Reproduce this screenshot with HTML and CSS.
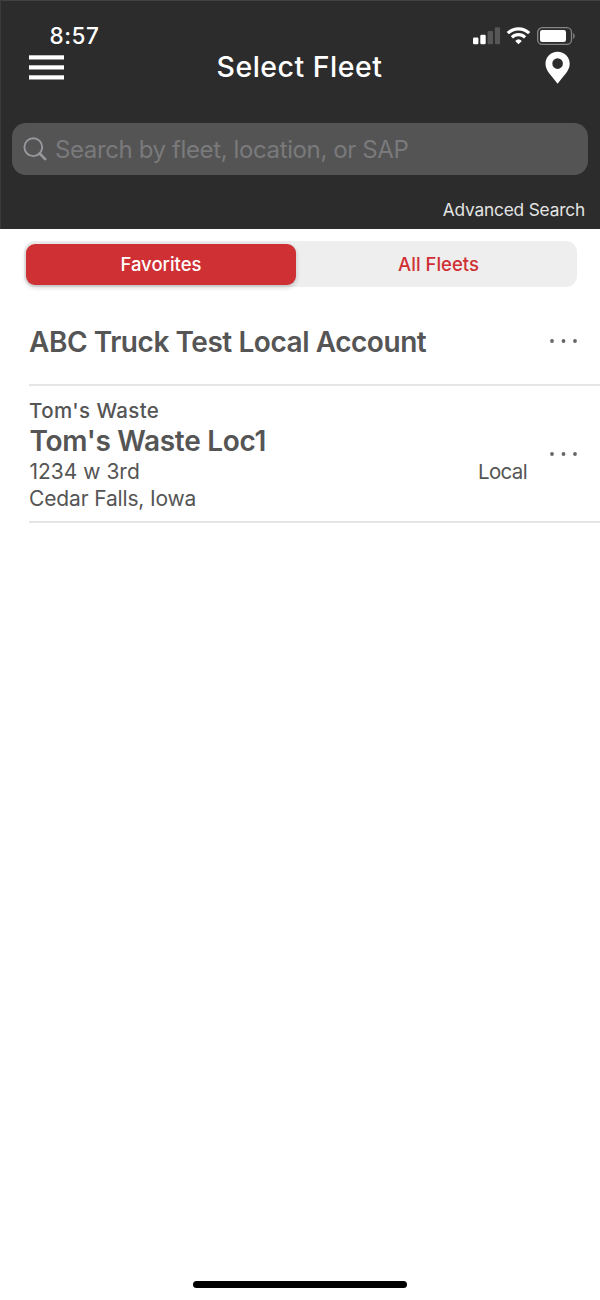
FILE: index.html
```html
<!DOCTYPE html>
<html lang="en">
<head>
<meta charset="utf-8">
<title>Select Fleet</title>
<link rel="stylesheet" href="styles.css">
</head>
<body>
<div class="screen">
  <header class="header">
    <div class="status">
      <span class="time">8:57</span>
      <svg class="status-icons" width="104" height="20" viewBox="0 0 104 20">
        <g fill="#fff"><rect x="1" y="10.5" width="5.4" height="6.7" rx="1.2"/><rect x="8.3" y="7.7" width="5.4" height="9.5" rx="1.2"/></g>
        <g fill="#565656"><rect x="15.6" y="4" width="5.4" height="13.2" rx="1.2"/><rect x="22.9" y="0.3" width="5.2" height="16.9" rx="1.2"/></g>
        <g fill="none" stroke="#fff" stroke-width="3.2"><path d="M35.8 6.2a15.4 15.4 0 0 1 21.4 0"/><path d="M39.9 10.3a9.5 9.5 0 0 1 13.2 0"/></g>
        <path d="M46.5 17.3l-3.3-3.4a4.8 4.8 0 0 1 6.6 0z" fill="#fff"/>
        <rect x="65.7" y="0.7" width="33.8" height="16.6" rx="4.6" fill="none" stroke="#858585" stroke-width="1.3"/>
        <rect x="68" y="3" width="26" height="12" rx="2.2" fill="#fff"/>
        <path d="M101.2 6.1c2 .8 2 5 0 5.8z" fill="#858585"/>
      </svg>
    </div>
    <nav class="nav">
      <svg class="menu" width="36" height="26" viewBox="0 0 36 26" fill="#fff"><rect x="0" y="0.3" width="35" height="4.2"/><rect x="0" y="10.3" width="35" height="4.2"/><rect x="0" y="20.3" width="35" height="4.2"/></svg>
      <h1 class="title">Select Fleet</h1>
      <svg class="pin" width="26" height="34" viewBox="0 0 26 34"><path fill="#fff" fill-rule="evenodd" d="M12.6.7C5.8.7.5 6 .5 12.7c0 7.500 6.300 11.700 12.100 20.100C18.400 24.400 24.700 20.200 24.700 12.700 24.700 6 19.400.7 12.600.7zM12.600 7.300a5.300 5.300 0 1 1 0 10.600 5.300 5.300 0 0 1 0-10.600z"/></svg>
    </nav>
    <div class="search">
      <svg width="25" height="25" viewBox="0 0 25 25" fill="none" stroke="#98989d"><circle cx="10.300" cy="10.200" r="8.900" stroke-width="1.900"/><path d="M16.600 16.500l5.600 5.600" stroke-width="2.600" stroke-linecap="round"/></svg>
      <span class="placeholder">Search by fleet, location, or SAP</span>
    </div>
    <a class="advanced">Advanced Search</a>
  </header>
  <div class="tabs">
    <div class="tab active"><span class="fav">Favorites</span></div>
    <div class="tab"><span class="all">All Fleets</span></div>
  </div>
  <main class="list">
    <section class="row first">
      <h2 class="name account">ABC Truck Test Local Account</h2>
      <svg class="dots" width="30" height="6" viewBox="0 0 30 6"><circle cx="3" cy="3" r="1.900"/><circle cx="14.500" cy="3" r="1.900"/><circle cx="26" cy="3" r="1.900"/></svg>
    </section>
    <section class="row second">
      <div class="details">
        <div class="company">Tom's Waste</div>
        <h2 class="name loc">Tom's Waste Loc1</h2>
        <div class="address"><span class="street">1234 w 3rd</span><span class="type">Local</span></div>
        <div class="city">Cedar Falls, Iowa</div>
      </div>
      <svg class="dots" width="30" height="6" viewBox="0 0 30 6"><circle cx="3" cy="3" r="1.900"/><circle cx="14.500" cy="3" r="1.900"/><circle cx="26" cy="3" r="1.900"/></svg>
    </section>
  </main>
  <div class="home"></div>
</div>
</body>
</html>
```
FILE: styles.css
```css
* { box-sizing: border-box; }
body { margin: 0; font-family: Inter, "Liberation Sans", sans-serif; color: #555; background: #fff; }
h1, h2 { margin: 0; }
span, h1, h2, .advanced, .company, .city { white-space: nowrap; }
.screen { width: 600px; height: 1300px; display: flex; flex-direction: column; overflow: hidden; }
.header { height: 229px; flex: none; background: #2c2c2c; border-top: 1px solid #414141; border-left: 1px solid #3a3a3a; color: #fff; display: flex; flex-direction: column; }
.status { height: 48px; display: flex; justify-content: space-between; padding: 21px 24px 0 48.5px; }
.time { font-size: 22.5px; line-height: 28px; font-weight: 500; letter-spacing: .5px; }
.status-icons { margin-top: 5px; }
.nav { height: 40px; display: grid; grid-template-columns: 60px 1fr 60px; padding: 0 30px 0 28px; }
.menu { margin-top: 6px; }
.title { font-size: 28.5px; line-height: 36px; font-weight: 500; justify-self: center; letter-spacing: .5px; }
.pin { margin: 2px 0 0 35px; }
.search { height: 52px; margin: 34px 12px 0 11px; border-radius: 14px; background: #545454; display: flex; align-items: center; padding-left: 11px; gap: 7px; }
.placeholder { font-size: 24px; line-height: 30px; color: #7a7a7c; letter-spacing: -.38px; padding-top: 2px; }
.advanced { align-self: flex-end; margin: 23px 15px 0 0; font-size: 17.3px; line-height: 24px; color: #e4e4e4; letter-spacing: -.17px; }
.tabs { flex: none; height: 46px; margin: 12px 23px 0 24px; padding: 3px 2px; border-radius: 11px; background: #eee; display: grid; grid-template-columns: 270px 1fr; }
.tab { display: flex; align-items: center; justify-content: center; font-size: 18.5px; color: #cf3034; font-weight: 500; padding-bottom: 2px; }
.tab.active { background: #cf3034; color: #fff; border-radius: 9px; height: 41px; box-shadow: 0 2px 5px rgba(0,0,0,.22); }
.all { padding-left: 6px; }
.list { margin-left: 29px; flex: 1; }
.row { display: flex; border-bottom: 2px solid #e5e5e5; padding-right: 21px; justify-content: space-between; }
.first { height: 99px; align-items: center; padding-top: 11px; }
.name { font-size: 28px; line-height: 32px; font-weight: 600; }
.account { letter-spacing: -.45px; padding-top: 1px; }
.loc { letter-spacing: -.3px; padding-left: .5px; }
.dots { fill: #666; }
.second { height: 137px; align-items: center; }
.details { width: 498px; padding-top: 0; }
.company { font-size: 20.5px; line-height: 25px; font-weight: 500; letter-spacing: .38px; padding-bottom: 2px; }
.address { display: flex; justify-content: space-between; font-size: 21px; line-height: 29px; }
.street { padding-left: .5px; }
.type { font-size: 20.5px; letter-spacing: -.65px; }
.city { font-size: 21px; line-height: 24px; letter-spacing: -.15px; padding-top: 1px; margin-bottom: -1px; }
.home { flex: none; width: 214px; height: 7px; border-radius: 4px; background: #000; margin: 0 0 12px 193px; }
```
